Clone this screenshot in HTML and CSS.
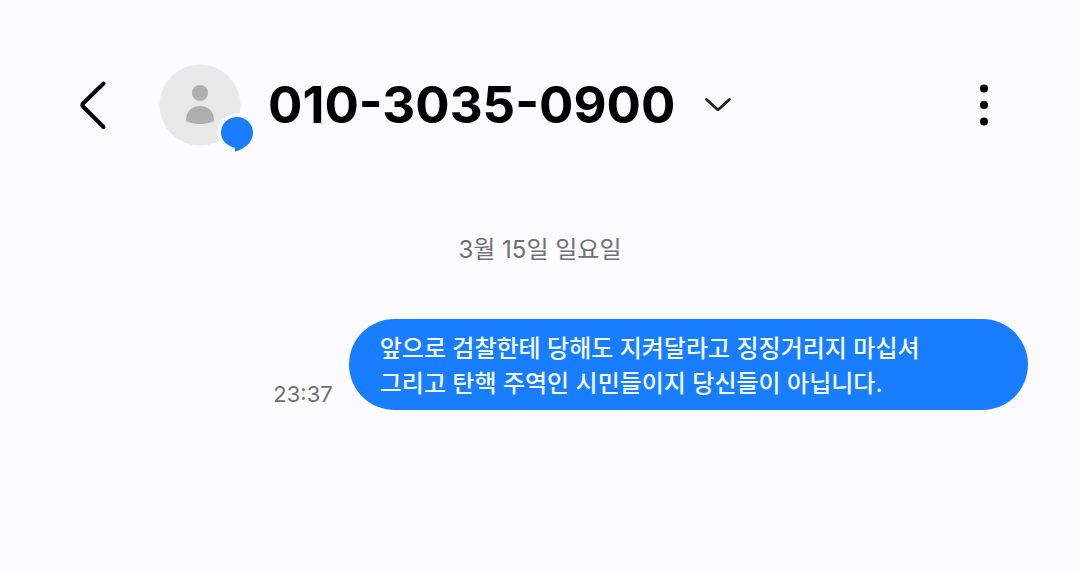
FILE: index.html
```html
<!DOCTYPE html>
<html lang="ko">
<head>
<meta charset="utf-8">
<meta name="viewport" content="width=device-width, initial-scale=1">
<title>010-3035-0900</title>
<link rel="stylesheet" href="styles.css">
</head>
<body>
<header class="bar">
  <button class="icon-button" type="button" aria-label="뒤로">
    <svg width="30" height="52" viewBox="0 0 30 52"><path d="M25.500 4.500 5 24.500q-1.500 1.500 0 3l20.500 20.500" fill="none" stroke="#000" stroke-width="4" stroke-linecap="round" stroke-linejoin="round"/></svg>
  </button>
  <svg class="avatar" width="96" height="98" viewBox="0 -8 96 98" aria-hidden="true">
    <circle cx="41" cy="41" r="40.500" fill="#e8e8e8"/>
    <circle cx="41" cy="29" r="8" fill="#afafaf"/>
    <path d="M27 57c-.4-8.500 5-15 14-15s14.400 6.500 14 15q-6 3-14 3t-14-3z" fill="#afafaf"/>
    <circle cx="78" cy="69" r="19.500" fill="#fcfcfe"/>
    <path d="M78 53c9 0 16 7 16 15.500 0 9-7 16-18 19l-.5-4C67.500 82 62 76 62 68.500 62 60 69 53 78 53z" fill="#187dff"/>
  </svg>
  <button class="contact" type="button">
    <span class="number">010-3035-0900</span>
    <svg width="30" height="18" viewBox="0 0 30 18" aria-hidden="true"><path d="M3.500 3.500l10.500 9.500q1 1 2 0L26.500 3.500" fill="none" stroke="#202022" stroke-width="2.800" stroke-linecap="round" stroke-linejoin="round"/></svg>
  </button>
  <button class="icon-button more" type="button" aria-label="옵션 더보기">
    <svg width="12" height="44" viewBox="0 0 12 44"><circle cx="6" cy="5.500" r="4"/><circle cx="6" cy="22" r="4"/><circle cx="6" cy="38.500" r="4"/></svg>
  </button>
</header>
<main class="thread">
  <time class="date">3월 15일 일요일</time>
  <div class="message">
    <time class="time">23:37</time>
    <p class="bubble">앞으로 검찰한테 당해도 지켜달라고 징징거리지 마십셔<br>그리고 탄핵 주역인 시민들이지 당신들이 아닙니다.</p>
  </div>
</main>
</body>
</html>
```
FILE: styles.css
```css
* { box-sizing: border-box; }
body {
  margin: 0;
  background: #fcfcfe;
  color: #000;
  font-family: Inter, "Noto Sans CJK KR", sans-serif;
}
.bar {
  display: flex;
  align-items: center;
  padding: 56px 90px 0 78px;
}
.icon-button, .contact {
  padding: 0;
  border: 0;
  background: none;
  color: inherit;
  font: inherit;
}
.icon-button { display: flex; }
.avatar { margin-left: 51px; }
.contact {
  display: flex;
  align-items: center;
  gap: 28px;
  margin-left: 13px;
}
.number {
  font-size: 51px;
  font-weight: 700;
  line-height: 90px;
}
.more { margin-left: auto; }
.thread { padding: 77px 52px 0; }
.date {
  display: block;
  color: #707074;
  font-size: 24px;
  line-height: 38px;
  text-align: center;
}
.message {
  display: flex;
  justify-content: flex-end;
  align-items: flex-end;
  gap: 16px;
  margin-top: 50px;
}
.time {
  color: #707074;
  font-size: 22px;
  line-height: 32px;
}
.bubble {
  width: 69.6%;
  margin: 0;
  padding: 12px 31px 9px;
  border-radius: 46px;
  background: #187dff;
  color: #f4fdff;
  font-size: 24px;
  font-weight: 500;
  line-height: 35px;
}
```
